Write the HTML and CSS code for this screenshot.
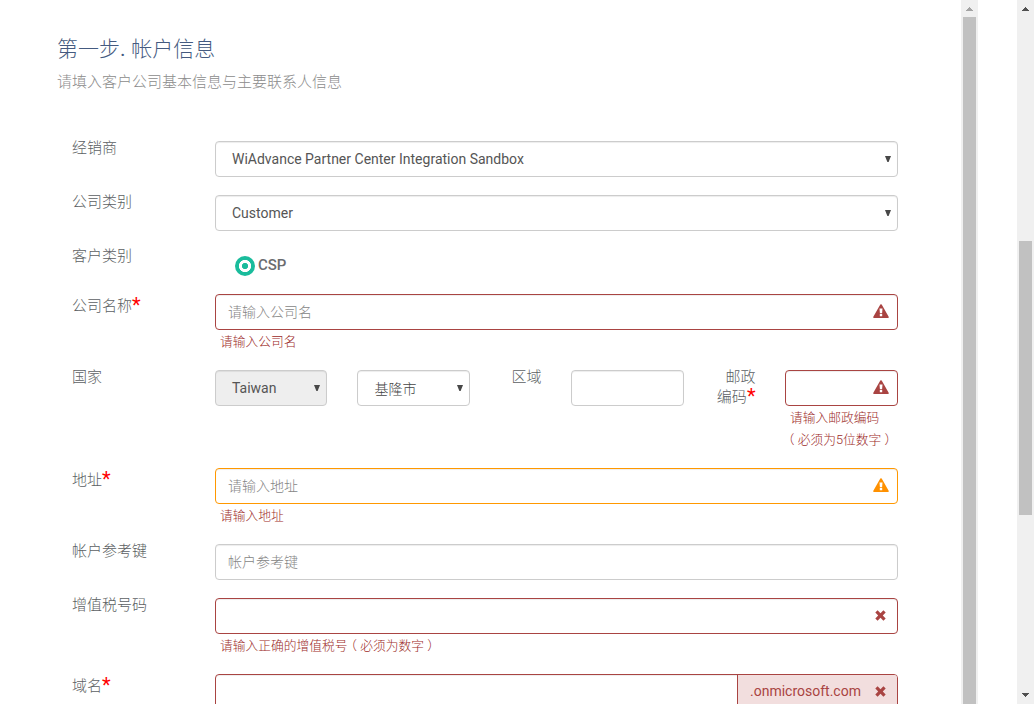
FILE: index.html
```html
<!DOCTYPE html>
<html lang="zh-CN">
<head>
<meta charset="utf-8">
<title>帐户信息</title>
<link rel="stylesheet" href="styles.css">
</head>
<body>
<svg class="defs" width="0" height="0">
  <symbol id="warn" viewBox="0 0 16 14"><path fill-rule="evenodd" d="M7.3 .6Q8 -.3 8.7 .6L15.8 13Q16 14 15 14H1Q0 14 .2 13ZM6.5 4.4L6.9 9.2H9.1L9.5 4.4ZM6.8 10.1V12.2H9.2V10.1Z"/></symbol>
  <symbol id="cross" viewBox="0 0 11 11"><path d="M2.6 .3L5.5 3.2L8.4 .3L10.7 2.6L7.8 5.5L10.7 8.4L8.4 10.7L5.5 7.8L2.6 10.7L.3 8.4L3.2 5.5L.3 2.6Z"/></symbol>
  <symbol id="caret" viewBox="0 0 6 6"><path d="M0 0H6L3.6 6H2.4Z"/></symbol>
</svg>
<div class="page">
  <main class="form">
    <h1 class="title">第一步<span class="dot">. </span>帐户信息</h1>
    <p class="subtitle">请填入客户公司基本信息与主要联系人信息</p>

    <div class="row">
      <div class="label">经销商</div>
      <div class="control select"><span>WiAdvance Partner Center Integration Sandbox</span><svg class="caret"><use href="#caret"/></svg></div>
    </div>
    <div class="row">
      <div class="label">公司类别</div>
      <div class="control select"><span>Customer</span><svg class="caret"><use href="#caret"/></svg></div>
    </div>
    <div class="row row-radio">
      <div class="label">客户类别</div>
      <div class="radio"><span class="radio-dot"></span><span>CSP</span></div>
    </div>
    <div class="row row-name">
      <div class="label required">公司名称<b class="star">*</b></div>
      <div class="field">
        <div class="control error"><span class="placeholder">请输入公司名</span><svg class="warn"><use href="#warn"/></svg></div>
        <div class="help">请输入公司名</div>
      </div>
    </div>
    <div class="row row-country">
      <div class="label">国家</div>
      <div class="group">
        <div class="control select disabled"><span>Taiwan</span><svg class="caret"><use href="#caret"/></svg></div>
        <div class="control select city"><span>基隆市</span><svg class="caret"><use href="#caret"/></svg></div>
        <div class="label mid">区域</div>
        <div class="control small"></div>
        <div class="label mid">邮政<br>编码<b class="star">*</b></div>
        <div class="field small">
          <div class="control error"><svg class="warn"><use href="#warn"/></svg></div>
          <div class="help help-zip"><span class="zip-text">请输入邮政编码</span><br><span class="paren">（</span>必须为5位数字<span class="paren">）</span></div>
        </div>
      </div>
    </div>
    <div class="row row-help">
      <div class="label required">地址<b class="star">*</b></div>
      <div class="field">
        <div class="control warning"><span class="placeholder">请输入地址</span><svg class="warn"><use href="#warn"/></svg></div>
        <div class="help">请输入地址</div>
      </div>
    </div>
    <div class="row">
      <div class="label">帐户参考键</div>
      <div class="control"><span class="placeholder">帐户参考键</span></div>
    </div>
    <div class="row row-help">
      <div class="label">增值税号码</div>
      <div class="field">
        <div class="control error"><svg class="cross"><use href="#cross"/></svg></div>
        <div class="help">请输入正确的增值税号<span class="paren">（</span>必须为数字<span class="paren">）</span></div>
      </div>
    </div>
    <div class="row">
      <div class="label required">域名<b class="star">*</b></div>
      <div class="control error domain"><div class="addon"><span class="suffix">.onmicrosoft.com</span><svg class="cross"><use href="#cross"/></svg></div></div>
    </div>
  </main>
  <div class="scrollbar inner">
    <svg class="arrow muted" viewBox="0 0 17 17"><path d="M8 7H9V8H10V9H11V10H12V11H5V10H6V9H7V8H8Z"/></svg>
    <div class="thumb"></div>
  </div>
  <div class="gutter"></div>
  <div class="scrollbar outer">
    <svg class="arrow" viewBox="0 0 17 17"><path d="M8 7H9V8H10V9H11V10H12V11H5V10H6V9H7V8H8Z"/></svg>
    <div class="thumb"></div>
    <svg class="arrow" viewBox="0 0 17 17"><path d="M5 6H12V7H11V8H10V9H9V10H8V9H7V8H6V7H5Z"/></svg>
  </div>
</div>
</body>
</html>
```

FILE: styles.css
```css
* { box-sizing: border-box; }
body {
  margin: 0;
  background: #fff;
  overflow: hidden;
  font-family: Roboto, "Noto Sans CJK SC", sans-serif;
  font-size: 14px;
  color: #555;
}
.defs { display: block; }
.page { display: flex; height: 704px; overflow: hidden; }
.form { width: 961px; flex: none; padding: 35px 63px 0 57px; }
.title {
  margin: 0;
  font-size: 21px;
  line-height: 28px;
  font-weight: 300;
  color: #445a80;
}
.dot { font-weight: 400; letter-spacing: .3px; }
.subtitle {
  margin: 9px 0 48px;
  font-size: 15px;
  line-height: 21px;
  font-weight: 300;
  color: #8c8c8c;
}
.row { display: flex; height: 54px; padding-left: 15px; }
.row-radio { height: 45px; }
.row-name, .row-help { height: 76px; }
.row-country { height: 98px; }
.label {
  width: 143px;
  flex: none;
  margin-top: -3px;
  font-size: 15px;
  line-height: 20px;
  font-weight: 300;
  color: #5c5f63;
}
.required { margin-top: 2px; }
.star {
  font-size: 20px;
  line-height: 1px;
  vertical-align: -1px;
  font-weight: 400;
  color: #f00;
}
.control {
  display: flex;
  align-items: center;
  justify-content: space-between;
  width: 683px;
  height: 36px;
  padding: 0 8px 0 12px;
  border: 1px solid #ccc;
  border-radius: 4px;
  box-shadow: inset 0 1px 1px rgba(0, 0, 0, .075);
}
.select { padding: 0 6px 0 16px; }
.caret { width: 6px; height: 6px; fill: #484848; }
.disabled { width: 112px; margin-right: 30px; background: #eee; }
.city { width: 113px; padding-left: 16.5px; }
.city span { font-weight: 300; color: #444; }
.radio {
  display: flex;
  align-items: center;
  gap: 3px;
  height: 31px;
  padding-left: 20px;
  font-size: 15px;
  font-weight: 500;
  color: #6a6c6f;
}
.radio-dot {
  width: 20px;
  height: 20px;
  margin-top: 3px;
  border-radius: 50%;
  background: radial-gradient(circle, #1abc9c 2.8px, #fff 3.4px, #fff 5.8px, #1abc9c 6.4px);
}
.field { width: 683px; }
.error { border-color: #a94442; fill: #a94442; }
.warning { border-color: #ff9800; fill: #ff9100; }
.placeholder { padding-bottom: 2px; font-weight: 300; color: #858585; }
.warn { width: 16px; height: 14px; margin: 0 0 2px auto; }
.cross { width: 11px; height: 11px; margin: 0 3px 1px auto; }
.help {
  padding: 1px 0 0 5px;
  font-size: 12.75px;
  line-height: 22px;
  font-weight: 300;
  color: #9c2b29;
  white-space: nowrap;
}
.paren { margin: 0 3.2px; font-feature-settings: "halt"; }
.group { display: flex; align-items: flex-start; }
.mid { width: 101px; padding-right: 29.5px; text-align: right; }
.small, .small .control { width: 113px; }
.help-zip { padding-left: 0; }
.zip-text { padding-left: 5px; }
.domain { justify-content: flex-end; padding: 0; }
.addon {
  display: flex;
  align-items: center;
  width: 160px;
  height: 34px;
  padding: 0 8px 0 12px;
  border-left: 1px solid #a94442;
  border-radius: 0 3px 3px 0;
  background: #f2dede;
  color: #a94442;
}
.suffix { padding-bottom: 2px; }
.scrollbar {
  display: flex;
  flex-direction: column;
  width: 17px;
  flex: none;
  background: #f0f0f0;
}
.gutter { width: 39px; flex: none; }
.thumb { margin: 0 2px; background: #c1c1c1; }
.inner .thumb { flex: 1; }
.outer { justify-content: space-between; }
.outer .thumb { height: 274px; margin-bottom: -52px; }
.arrow { width: 17px; height: 17px; flex: none; fill: #505050; shape-rendering: crispEdges; }
.muted { fill: #a3a3a3; }
```
